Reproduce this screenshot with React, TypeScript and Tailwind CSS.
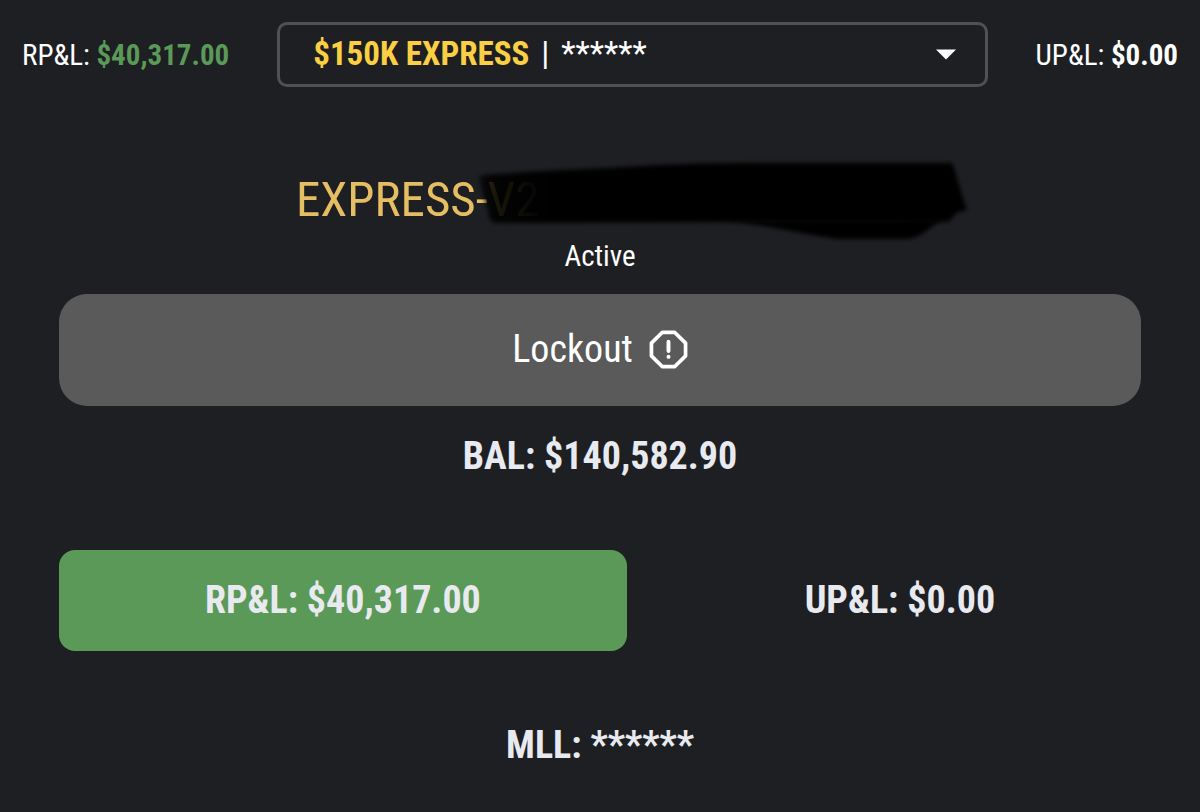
import React, { useState } from 'react';

type Account = {
  id: string;
  name: string;
  number: string;
};

const accounts: Account[] = [{ id: 'express-150', name: '$150K EXPRESS', number: '******' }];

function Redaction() {
  return (
    <svg
      className="absolute -top-3 left-[175px] w-[508px] h-[92px] pointer-events-none"
      viewBox="472 155 508 92"
      aria-hidden="true"
    >
      <defs>
        <filter id="soft" x="-5%" y="-20%" width="110%" height="140%">
          <feGaussianBlur stdDeviation="2" />
        </filter>
        <linearGradient id="ink" x1="0" x2="1" y1="0" y2="0">
          <stop offset="0" stopColor="#000" stopOpacity="0.7" />
          <stop offset="0.03" stopColor="#000" stopOpacity="0.88" />
          <stop offset="0.12" stopColor="#000" stopOpacity="0.97" />
          <stop offset="0.16" stopColor="#000" />
        </linearGradient>
      </defs>
      <path
        d="M725 221 C765 224 800 234 838 239 L908 239 C922 238 930 228 942 220 Z"
        fill="#040405"
        filter="url(#soft)"
      />
      <path
        d="M480 177 Q482 174 500 174 C550 170 600 169 660 165 C700 163 740 163 790 163 L953 163 C957 172 961 190 968 210 L957 213 L950 222 L740 222 L498 223 Q491 223 490 217 C488 205 483 192 480 177 Z"
        fill="url(#ink)"
        filter="url(#soft)"
      />
    </svg>
  );
}

export default function App() {
  const [accountId, setAccountId] = useState(accounts[0].id);
  const account = accounts.find(a => a.id === accountId) || accounts[0];

  return (
    <div className="min-h-screen bg-[#1e1f23] text-white font-['Roboto_Condensed','Liberation_Sans_Narrow',sans-serif]">
      <header className="flex items-center gap-12 px-[22px] pt-[22px]">
        <div className="text-[29px] leading-9 whitespace-nowrap">
          RP&amp;L: <span className="font-bold text-[#5a9958]">$40,317.00</span>
        </div>

        <div className="relative flex-1">
          <select
            aria-label="Account"
            value={accountId}
            onChange={e => setAccountId(e.target.value)}
            className="block w-full h-[65px] appearance-none rounded-[10px] border-[3px] border-[#505155] bg-transparent px-9 text-[33px] text-transparent"
          >
            {accounts.map(a => (
              <option key={a.id} value={a.id}>
                {a.name} | {a.number}
              </option>
            ))}
          </select>
          <div
            className="absolute inset-0 flex items-center gap-3 pl-9 pr-8 pb-[2px] text-[33px] leading-9 whitespace-nowrap pointer-events-none"
            aria-hidden="true"
          >
            <span className="font-bold text-[#fbcf43]">{account.name}</span>
            <span>|</span>
            <span>{account.number}</span>
            <svg className="ml-auto mt-[2px] w-5 h-[11px]" viewBox="0 0 20 11">
              <path d="M0 0.500H20L10 10.500Z" fill="#fff" />
            </svg>
          </div>
        </div>

        <div className="text-[29px] leading-9 whitespace-nowrap">
          UP&amp;L: <span className="font-bold">$0.00</span>
        </div>
      </header>

      <main className="px-[59px] pt-20 pb-11 text-center">
        <div className="relative mx-auto w-[608px] max-w-full text-left">
          <h1 className="text-[49px] leading-[66px] text-[#e5bd62]">EXPRESS-V2</h1>
          <Redaction />
        </div>
        <p className="mt-1 text-[29px] leading-[38px]">Active</p>

        <button
          type="button"
          className="mt-[19px] flex h-28 w-full items-center justify-center gap-4 rounded-[28px] bg-[#5a5a5a] pb-[2px] text-[38px]"
        >
          Lockout
          <svg className="w-[39px] h-[39px]" viewBox="0 0 40 40" fill="none" stroke="#fff" strokeLinecap="round" strokeLinejoin="round">
            <path d="M13.500 2.500H26.500L37.500 13.500V26.500L26.500 37.500H13.500L2.500 26.500V13.500Z" strokeWidth="3.800" />
            <path d="M20 12V21.500M20 27.500V27.600" strokeWidth="4" />
          </svg>
        </button>

        <div className="mt-[26px] text-[38px] leading-[48px] font-bold text-[#e8eaef]">BAL: $140,582.90</div>

        <div className="mt-[70px] flex gap-8 text-[38px] leading-[48px] font-bold text-[#e8eaef]">
          <div className="flex-auto rounded-2xl bg-[#5a9958] pt-[26px] pb-[27px]">RP&amp;L: $40,317.00</div>
          <div className="flex-auto pt-[26px] pb-[27px]">UP&amp;L: $0.00</div>
        </div>

        <div className="mt-[70px] text-[38px] leading-[48px] font-bold text-[#e8eaef]">MLL: ******</div>
      </main>
    </div>
  );
}
